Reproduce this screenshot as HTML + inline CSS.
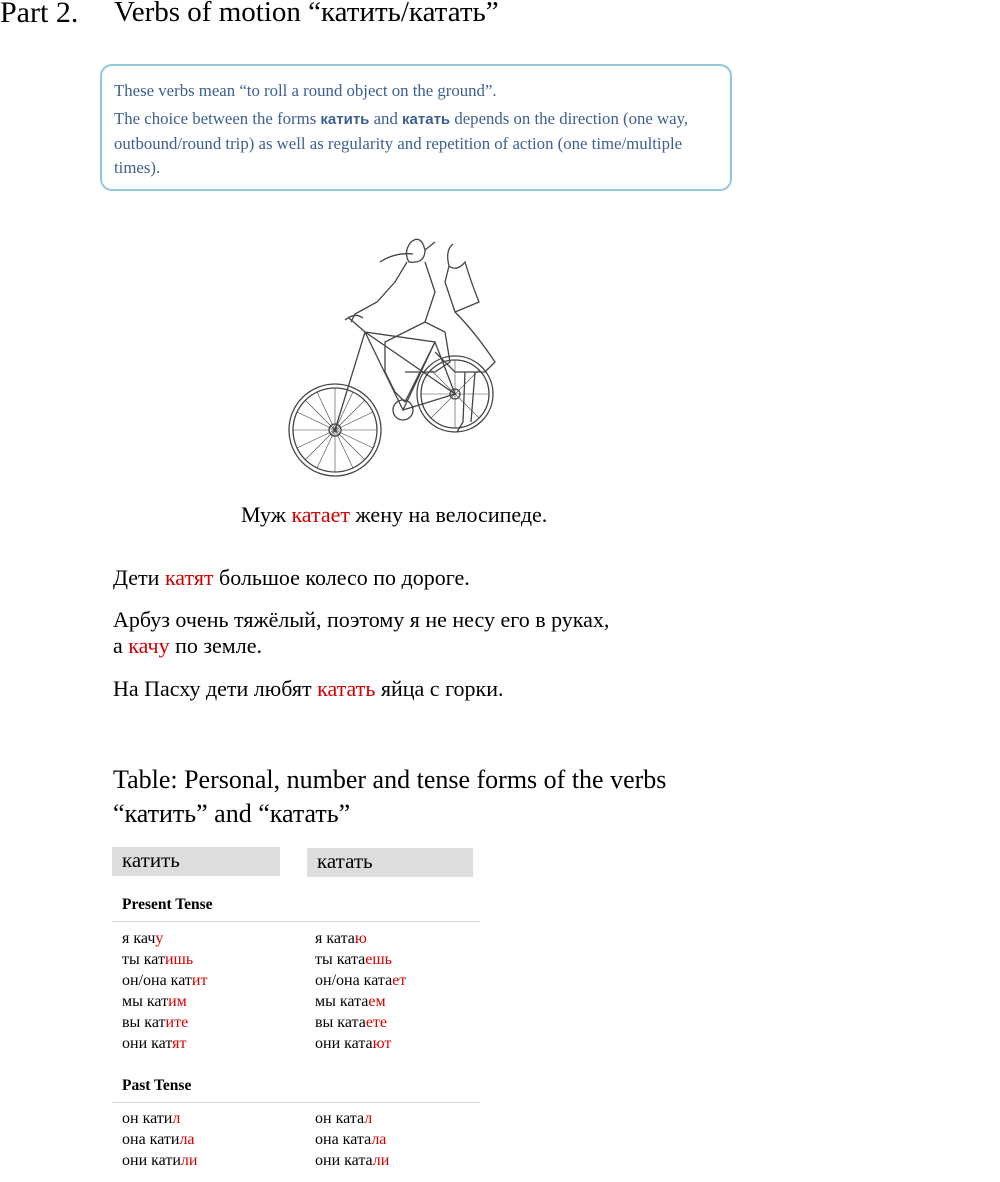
<!DOCTYPE html>
<html><head><meta charset="utf-8"><style>
body{margin:0;background:#fff;font-family:"Liberation Serif",serif;color:#000;width:1000px;height:1182px;position:relative;overflow:hidden}
.a{position:absolute;white-space:nowrap}
.r{color:#d40000}
.box{position:absolute;left:100px;top:64px;width:628px;height:123px;border:2px solid #93c6dd;border-radius:12px}
.box p{margin:0;color:#3b5f93;font-size:16.8px;line-height:24px;position:absolute;left:12px;white-space:normal}
.box b{font-family:"Liberation Sans",sans-serif;font-size:15px}
.s{font-size:22px}
.t{font-size:16px}
.hd{position:absolute;background:#dcdedd;font-size:21px;height:29px;line-height:27px;padding-left:10px;box-sizing:border-box}
.ln{position:absolute;left:112px;width:368px;height:1px;background:#d8d8d8}
</style></head><body>
<div class="a" style="left:0;top:-4px;font-size:30px">Part 2.</div>
<div class="a" style="left:114px;top:-4px;font-size:29px">Verbs of motion “катить/катать”</div>
<div class="box">
<p style="top:13px">These verbs mean “to roll a round object on the ground”.</p>
<p style="top:41px;width:605px">The choice between the forms <b>катить</b> and <b>катать</b> depends on the direction (one way, outbound/round trip) as well as regularity and repetition of action (one time/multiple times).</p>
</div>
<svg class="a" style="left:285px;top:222px" width="230" height="260" viewBox="0 0 230 260" fill="none" stroke="#444" stroke-width="1.3">
<circle cx="50" cy="208" r="46"/><circle cx="50" cy="208" r="42"/><circle cx="50" cy="208" r="6"/>
<circle cx="170" cy="172" r="38"/><circle cx="170" cy="172" r="34"/><circle cx="170" cy="172" r="5"/>
<g stroke-width=".6"><path d="M50 166V250M8 208H92M20 178L80 238M80 178L20 238M32 170L68 246M68 170L32 246M12 190L88 226M88 190L12 226"/><path d="M170 138V206M136 172H204M146 148L194 196M194 148L146 196"/></g>
<path d="M50 208L80 110L170 172M80 110L150 120L170 172M150 120L118 188L80 110M118 188L170 172M64 96L80 110M60 98Q70 90 78 96"/>
<circle cx="118" cy="188" r="10"/>
<path d="M126 20Q118 30 124 40Q140 42 140 28Q136 12 126 20M122 40L110 60L92 80L70 92L66 100M140 40L150 70L140 100L120 110L100 120L100 150L110 170L120 180M140 100L160 110L165 140L150 150L120 150M150 120L130 160L120 180"/>
<path d="M168 22Q160 28 164 44Q172 50 180 40Q186 60 194 80L170 90L160 60L164 44M170 90Q190 110 210 140L200 150L170 150L150 130M180 150L178 200L172 210M190 150L186 200"/>
<path d="M95 40Q110 30 128 32M140 28L150 20"/>
</svg>
<div class="a s" style="left:241px;top:502px">Муж <span class="r">катает</span> жену на велосипеде.</div>
<div class="a s" style="left:113px;top:565px">Дети <span class="r">катят</span> большое колесо по дороге.</div>
<div class="a s" style="left:113px;top:607px">Арбуз очень тяжёлый, поэтому я не несу его в руках,</div>
<div class="a s" style="left:113px;top:633px">а <span class="r">качу</span> по земле.</div>
<div class="a s" style="left:113px;top:676px">На Пасху дети любят <span class="r">катать</span> яйца с горки.</div>
<div class="a" style="left:113px;top:763px;font-size:26px;line-height:34px;white-space:normal;width:620px">Table: Personal, number and tense forms of the verbs “катить” and “катать”</div>
<div class="hd" style="left:112px;top:847px;width:168px">катить</div>
<div class="hd" style="left:307px;top:848px;width:166px">катать</div>
<div class="a" style="left:122px;top:896px;font-weight:bold;font-size:15.5px">Present Tense</div>
<div class="ln" style="top:921px"></div>
<div class="a t" style="left:122px;top:928px;line-height:21px">я кач<span class="r">у</span><br>ты кат<span class="r">ишь</span><br>он/она кат<span class="r">ит</span><br>мы кат<span class="r">им</span><br>вы кат<span class="r">ите</span><br>они кат<span class="r">ят</span></div>
<div class="a t" style="left:315px;top:928px;line-height:21px">я ката<span class="r">ю</span><br>ты ката<span class="r">ешь</span><br>он/она ката<span class="r">ет</span><br>мы ката<span class="r">ем</span><br>вы ката<span class="r">ете</span><br>они ката<span class="r">ют</span></div>
<div class="a" style="left:122px;top:1077px;font-weight:bold;font-size:15.5px">Past Tense</div>
<div class="ln" style="top:1102px"></div>
<div class="a t" style="left:122px;top:1108px;line-height:21px">он кати<span class="r">л</span><br>она кати<span class="r">ла</span><br>они кати<span class="r">ли</span></div>
<div class="a t" style="left:315px;top:1108px;line-height:21px">он ката<span class="r">л</span><br>она ката<span class="r">ла</span><br>они ката<span class="r">ли</span></div>
</body></html>
